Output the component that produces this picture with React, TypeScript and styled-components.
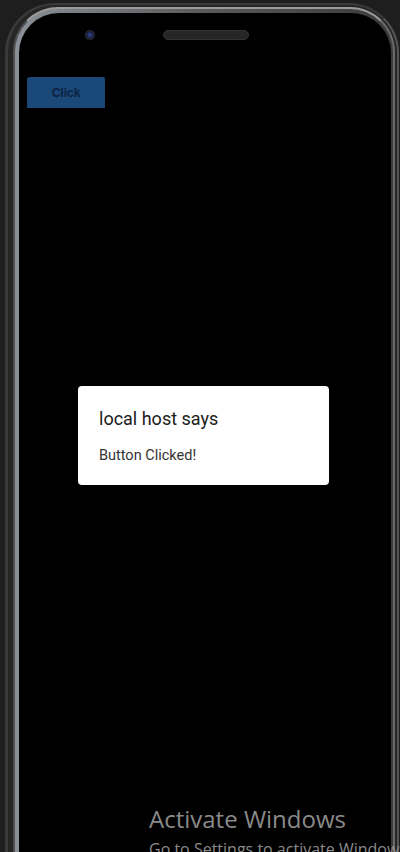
import React from "react";
import styled, { createGlobalStyle } from "styled-components";

const Global = createGlobalStyle`
  html, body { margin: 0; padding: 0; background: #1e1e1e; overflow: hidden; }
  body { width: 400px; height: 852px; font-family: Roboto, "Noto Sans", sans-serif; }
`;

const Desk = styled.div`
  position: relative;
  width: 400px;
  height: 852px;
  overflow: hidden;
  background: #1e1e1e;
  padding: 3px 1px 0 5px;
  box-sizing: border-box;
`;

const Phone = styled.div`
  height: 900px;
  border-radius: 50px;
  background: #262626;
  border: 3px solid #3a3a3a;
  border-top-width: 2px;
  border-right-width: 2px;
  border-right-color: #555;
  padding: 2px 2px 0 5px;
  box-sizing: border-box;
`;

const Rim = styled.div`
  height: 100%;
  border-radius: 45px;
  border: 2px solid #4e4e4e;
  border-top-color: #9a9a9a;
  border-right-color: #6a6a6a;
  padding: 4px 2px 0 4px;
  background: linear-gradient(90deg, #8a9098 0%, #5a5a5a 50%, #3a3a3a 100%);
  box-sizing: border-box;
  display: flex;
`;

const Screen = styled.div`
  flex: 1;
  border-radius: 40px;
  background: #000;
  display: flex;
  flex-direction: column;
  align-items: flex-start;
`;

const Sensors = styled.div`
  display: flex;
  align-items: center;
  gap: 68px;
  margin: 17px 0 0 66px;
  height: 10px;
`;

const Camera = styled.div`
  width: 10px;
  height: 10px;
  border-radius: 50%;
  background: radial-gradient(circle at 50% 50%, #2b3a7a 0 2px, #141a30 3px, #2e2e33 5px);
`;

const Speaker = styled.div`
  width: 84px;
  height: 8px;
  border-radius: 5px;
  background: #262626;
  border: 1px solid #333;
`;

const ClickButton = styled.button`
  margin: 37px 0 0 8px;
  width: 78px;
  height: 31px;
  border: none;
  border-radius: 3px 2px 0 0;
  background: #1a4878;
  color: #0c2240;
  font-family: "Liberation Sans", Arial, sans-serif;
  font-weight: bold;
  font-size: 12px;
  padding: 0;
`;

const Dialog = styled.div`
  margin: 278px 0 0 59px;
  width: 251px;
  height: 99px;
  box-sizing: border-box;
  background: #fff;
  border-radius: 4px;
  padding: 21px 21px 0;
  display: flex;
  flex-direction: column;
`;

const Title = styled.div`
  font-family: Roboto, sans-serif;
  font-size: 18px;
  color: #202020;
  line-height: 24px;
`;

const Body = styled.div`
  font-family: Roboto, sans-serif;
  font-size: 14.5px;
  color: #333;
  line-height: 18px;
  margin-top: 16px;
`;

const Watermark = styled.div`
  position: absolute;
  left: 149px;
  top: 802px;
  color: #8a8a8a;
  font-family: "Open Sans", "Noto Sans", sans-serif;
  white-space: nowrap;
`;

const WmTitle = styled.div`
  font-size: 24px;
  line-height: 34px;
`;

const WmSub = styled.div`
  font-size: 16px;
  line-height: 22px;
  margin-top: 2px;
`;

export default function App() {
  return (
    <>
      <Global />
      <Desk>
        <Phone>
          <Rim>
            <Screen>
              <Sensors>
                <Camera />
                <Speaker />
              </Sensors>
              <ClickButton>Click</ClickButton>
              <Dialog>
                <Title>local host says</Title>
                <Body>Button Clicked!</Body>
              </Dialog>
            </Screen>
          </Rim>
        </Phone>
        <Watermark>
          <WmTitle>Activate Windows</WmTitle>
          <WmSub>Go to Settings to activate Windows.</WmSub>
        </Watermark>
      </Desk>
    </>
  );
}
